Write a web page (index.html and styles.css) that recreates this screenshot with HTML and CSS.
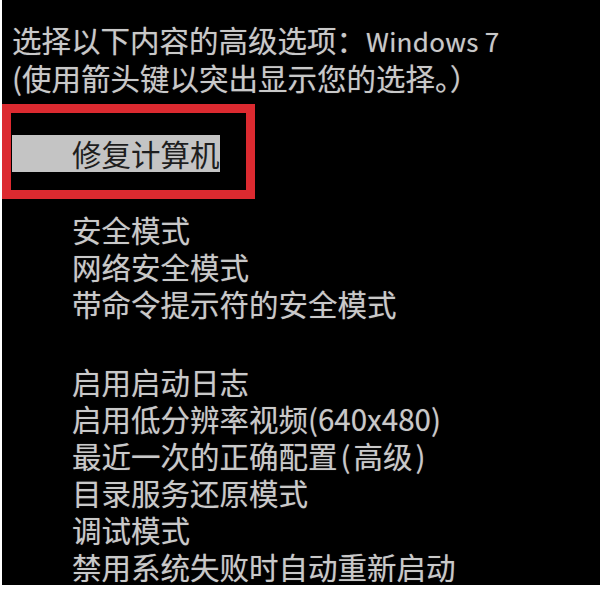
FILE: index.html
```html
<!DOCTYPE html>
<html lang="zh-CN">
<head>
    <meta charset="UTF-8">
    <meta name="viewport" content="width=device-width, initial-scale=1.0">
    <title>高级启动选项</title>
    <link rel="stylesheet" href="styles.css">
</head>
<body>
    <div class="screen">
        <div class="header">
            <div class="line">选择以下内容的高级选项：<span class="os">Windows 7</span></div>
            <div class="line">(使用箭头键以突出显示您的选择。）</div>
        </div>

        <div class="selected">修复计算机</div>

        <div class="menu-group first">
            <div class="item">安全模式</div>
            <div class="item">网络安全模式</div>
            <div class="item">带命令提示符的安全模式</div>
        </div>

        <div class="menu-group">
            <div class="item">启用启动日志</div>
            <div class="item">启用低分辨率视频(640x480)</div>
            <div class="item">最近一次的正确配置<span class="paren">(</span>高级<span class="paren">)</span></div>
            <div class="item">目录服务还原模式</div>
            <div class="item">调试模式</div>
            <div class="item">禁用系统失败时自动重新启动</div>
        </div>

        <!-- red annotation frame drawn over the screenshot -->
        <div class="mark"></div>
    </div>
</body>
</html>
```

FILE: styles.css
```css
body {
    margin: 0;
    background-color: #ffffff;
    font-family: "Noto Sans CJK SC", "Noto Sans", sans-serif;
}
.screen {
    position: relative;
    height: 585px;
    margin-left: 2px;
    padding-top: 21px;
    box-sizing: border-box;
    overflow: hidden;
    background-color: #000000;
    color: #c9c9c9;
    font-size: 29.5px;
    line-height: 37px;
    text-shadow: 0 0 1px rgba(255, 255, 255, 0.35);
}
.header {
    padding-left: 10px;
}
.line {
    white-space: nowrap;
}
.os {
    font-size: 26px;
    letter-spacing: 0.3px;
}
.selected {
    width: 208px;
    margin-top: 39px;
    margin-left: 10px;
    padding-left: 60px;
    box-sizing: border-box;
    white-space: nowrap;
    background-color: #c4c4c4;
    color: #1e1e1e;
    text-shadow: none;
}
.menu-group {
    margin-top: 41px;
    padding-left: 70px;
}
.menu-group.first {
    margin-top: 39px;
}
.item {
    white-space: nowrap;
}
.paren {
    padding: 0 3px;
}
.mark {
    position: absolute;
    left: 0;
    top: 104px;
    width: 253px;
    height: 95px;
    box-sizing: border-box;
    border: 9px solid #dc2a30;
}
```
